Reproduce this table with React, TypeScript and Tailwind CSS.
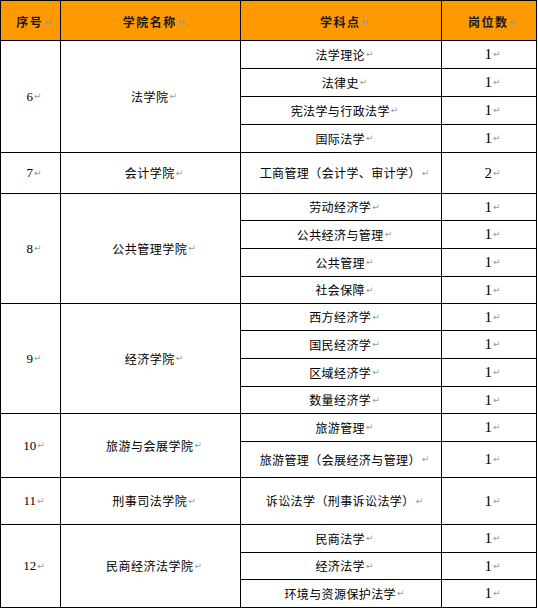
import React from "react";

type Group = {
  seq: string;
  college: string;
  span: string;
  items: { name: string; count: string }[];
};

const groups: Group[] = [
  {
    seq: "6",
    college: "法学院",
    span: "row-span-4",
    items: [
      { name: "法学理论", count: "1" },
      { name: "法律史", count: "1" },
      { name: "宪法学与行政法学", count: "1" },
      { name: "国际法学", count: "1" },
    ],
  },
  {
    seq: "7",
    college: "会计学院",
    span: "row-span-1",
    items: [{ name: "工商管理（会计学、审计学）", count: "2" }],
  },
  {
    seq: "8",
    college: "公共管理学院",
    span: "row-span-4",
    items: [
      { name: "劳动经济学", count: "1" },
      { name: "公共经济与管理", count: "1" },
      { name: "公共管理", count: "1" },
      { name: "社会保障", count: "1" },
    ],
  },
  {
    seq: "9",
    college: "经济学院",
    span: "row-span-4",
    items: [
      { name: "西方经济学", count: "1" },
      { name: "国民经济学", count: "1" },
      { name: "区域经济学", count: "1" },
      { name: "数量经济学", count: "1" },
    ],
  },
  {
    seq: "10",
    college: "旅游与会展学院",
    span: "row-span-2",
    items: [
      { name: "旅游管理", count: "1" },
      { name: "旅游管理（会展经济与管理）", count: "1" },
    ],
  },
  {
    seq: "11",
    college: "刑事司法学院",
    span: "row-span-1",
    items: [{ name: "诉讼法学（刑事诉讼法学）", count: "1" }],
  },
  {
    seq: "12",
    college: "民商经济法学院",
    span: "row-span-3",
    items: [
      { name: "民商法学", count: "1" },
      { name: "经济法学", count: "1" },
      { name: "环境与资源保护法学", count: "1" },
    ],
  },
];

const Mark = () => (
  <span className="ml-[1px] text-[9px] leading-none tracking-normal text-[#9a9a9a] [font-family:'DejaVu_Sans',sans-serif]">
    ↵
  </span>
);

const cell =
  "flex items-center justify-center pl-[7px] border-r border-b border-black whitespace-nowrap";

export default function App() {
  return (
    <div className="w-[538px] h-[608px] bg-white">
      <div className="grid w-[537px] grid-cols-[60px_180px_201px_95px] grid-rows-[40px_28px_28px_28px_28px_41px_27px_28px_28px_27px_27px_28px_28px_27px_28px_36px_47px_28px_27px_28px] border-l border-t border-black text-[12px] text-black [font-family:'Noto_Sans_CJK_SC',sans-serif]">
        {["序号", "学院名称", "学科点", "岗位数"].map((h) => (
          <div
            key={h}
            className={`${cell} bg-[#ff9900] pt-[3px] font-bold tracking-[1.5px] text-[#1a1a1a]`}
          >
            {h}
            <Mark />
          </div>
        ))}
        {groups.map((g) =>
          g.items.map((it, i) => (
            <React.Fragment key={g.seq + it.name}>
              {i === 0 && (
                <>
                  <div
                    className={`${cell} ${g.span} text-[13px] [font-family:'Liberation_Serif',serif]`}
                  >
                    {g.seq}
                    <Mark />
                  </div>
                  <div className={`${cell} ${g.span} tracking-[0.5px]`}>
                    {g.college}
                    <Mark />
                  </div>
                </>
              )}
              <div className={`${cell} tracking-[0.4px]`}>
                {it.name}
                <Mark />
              </div>
              <div
                className={`${cell} text-[15px] [font-family:'Liberation_Serif',serif]`}
              >
                {it.count}
                <Mark />
              </div>
            </React.Fragment>
          ))
        )}
      </div>
    </div>
  );
}
